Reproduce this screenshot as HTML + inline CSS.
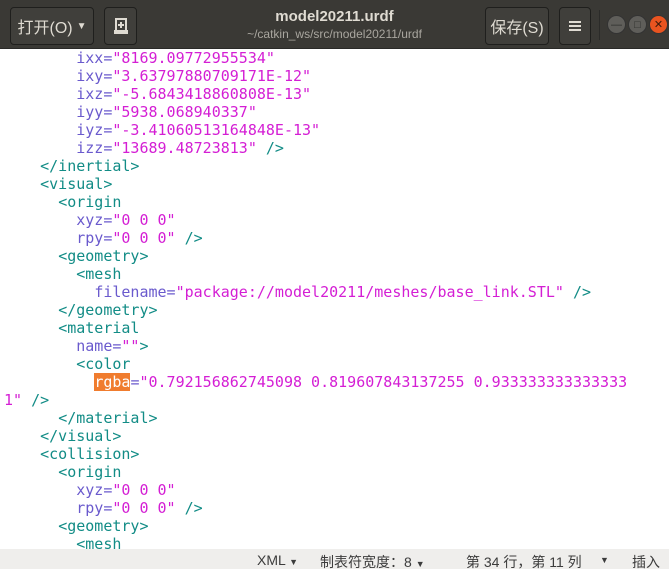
<!DOCTYPE html>
<html><head><meta charset="utf-8"><style>
*{margin:0;padding:0;box-sizing:border-box}
body{width:669px;height:569px;overflow:hidden;background:#fff;font-family:"Liberation Sans","Noto Sans CJK SC",sans-serif;position:relative}
.hdr{position:absolute;left:0;top:0;width:669px;height:49px;background:#3a3935;border-bottom:1px solid #2a2a28}
.btn{position:absolute;top:7px;height:38px;border:1px solid #1f1f1d;border-radius:4px;background:#403f3b;color:#dfdbd2;font-size:16px;display:flex;align-items:center;justify-content:center}
.title{position:absolute;left:0;width:669px;text-align:center;color:#dfdbd2}
.wb{position:absolute;top:15px;width:19px;height:19px;border-radius:50%;background:#5f5e5a;border:1px solid #333;color:#2e2e2c;font-size:11px;display:flex;align-items:center;justify-content:center}
.ed{position:absolute;left:0;top:49px;width:669px;height:500px;overflow:hidden;font-family:"DejaVu Sans Mono",monospace;font-size:15px;line-height:18px;white-space:pre;padding-left:4px}
.t{color:#128c86}.a{color:#6a5acd}.v{color:#d41ed4}
.hl{background:#f07c2e;color:#fff}
.sb{position:absolute;left:0;top:549px;width:669px;height:20px;background:#efeeec;font-size:14px;color:#3c3c3c}
.sb span{position:absolute;top:3px}
</style></head><body>
<div class="hdr">
<div class="btn" style="left:10px;width:84px">打开(O) <span style="font-size:10px;margin-left:4px">▼</span></div>
<div class="btn" style="left:104px;width:33px"><svg width="16" height="16" viewBox="0 0 16 16"><path d="M3 1h10v12H3z M2 13h12v2H2z" fill="none" stroke="#dfdbd2" stroke-width="2"/><path d="M8 4v6M5 7h6" stroke="#dfdbd2" stroke-width="2"/></svg></div>
<div class="title" style="top:8px;font-size:15px;font-weight:bold">model20211.urdf</div>
<div class="title" style="top:27px;font-size:12px;color:#a9a69f">~/catkin_ws/src/model20211/urdf</div>
<div class="btn" style="left:485px;width:64px">保存(S)</div>
<div class="btn" style="left:559px;width:32px"><svg width="14" height="12"><path d="M1 2h12M1 6h12M1 10h12" stroke="#dfdbd2" stroke-width="2"/></svg></div>
<div style="position:absolute;left:599px;top:10px;width:1px;height:30px;background:#2b2b29"></div>
<div class="wb" style="left:607px">—</div>
<div class="wb" style="left:628px">□</div>
<div class="wb" style="left:649px;background:#e95420;color:#3a1a0a">✕</div>
</div>
<div class="ed">        <span class="a">ixx=</span><span class="v">"8169.09772955534"</span>
        <span class="a">ixy=</span><span class="v">"3.63797880709171E-12"</span>
        <span class="a">ixz=</span><span class="v">"-5.6843418860808E-13"</span>
        <span class="a">iyy=</span><span class="v">"5938.068940337"</span>
        <span class="a">iyz=</span><span class="v">"-3.41060513164848E-13"</span>
        <span class="a">izz=</span><span class="v">"13689.48723813"</span> <span class="t">/&gt;</span>
    <span class="t">&lt;/inertial&gt;</span>
    <span class="t">&lt;visual&gt;</span>
      <span class="t">&lt;origin</span>
        <span class="a">xyz=</span><span class="v">"0 0 0"</span>
        <span class="a">rpy=</span><span class="v">"0 0 0"</span> <span class="t">/&gt;</span>
      <span class="t">&lt;geometry&gt;</span>
        <span class="t">&lt;mesh</span>
          <span class="a">filename=</span><span class="v">"package://model20211/meshes/base_link.STL"</span> <span class="t">/&gt;</span>
      <span class="t">&lt;/geometry&gt;</span>
      <span class="t">&lt;material</span>
        <span class="a">name=</span><span class="v">""</span><span class="t">&gt;</span>
        <span class="t">&lt;color</span>
          <span class="hl">rgba</span><span class="a">=</span><span class="v">"0.792156862745098 0.819607843137255 0.933333333333333</span>
<span class="v">1"</span> <span class="t">/&gt;</span>
      <span class="t">&lt;/material&gt;</span>
    <span class="t">&lt;/visual&gt;</span>
    <span class="t">&lt;collision&gt;</span>
      <span class="t">&lt;origin</span>
        <span class="a">xyz=</span><span class="v">"0 0 0"</span>
        <span class="a">rpy=</span><span class="v">"0 0 0"</span> <span class="t">/&gt;</span>
      <span class="t">&lt;geometry&gt;</span>
        <span class="t">&lt;mesh</span>
</div>
<div class="sb">
<span style="left:257px">XML <small style="font-size:9px">▼</small></span>
<span style="left:320px">制表符宽度：8 <small style="font-size:9px">▼</small></span>
<span style="left:466px">第 34 行，第 11 列</span>
<span style="left:600px;font-size:9px;top:6px">▼</span>
<span style="left:632px">插入</span>
</div>
</body></html>
